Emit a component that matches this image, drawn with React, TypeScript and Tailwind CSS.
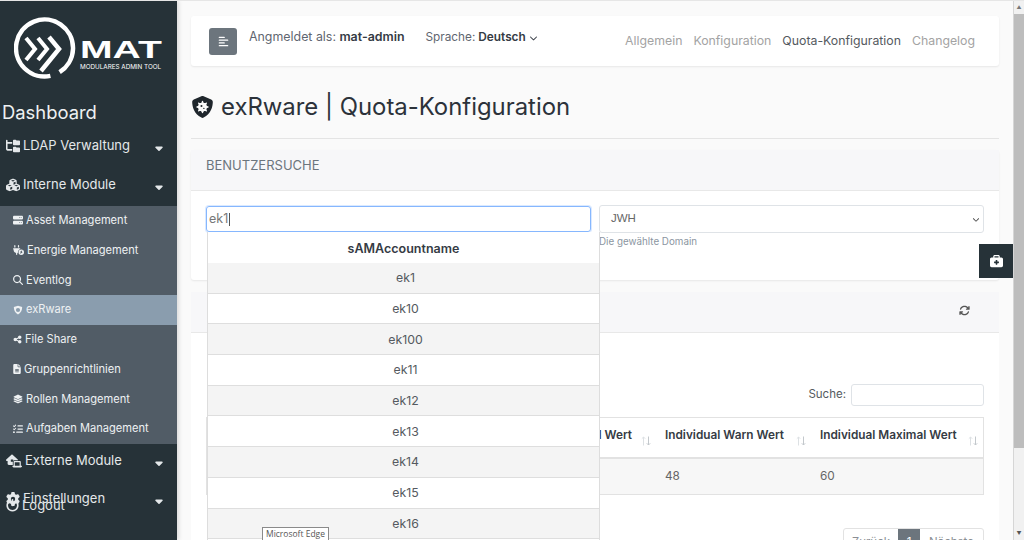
import {
  FaAlignLeft,
  FaArrowsRotate,
  FaBriefcaseMedical,
  FaCaretDown,
  FaChevronDown,
  FaCubes,
  FaFileLines,
  FaFolderTree,
  FaGear,
  FaHouseLaptop,
  FaLayerGroup,
  FaListCheck,
  FaMagnifyingGlass,
  FaPlugCircleBolt,
  FaPowerOff,
  FaServer,
  FaShareNodes,
  FaShieldVirus,
} from "react-icons/fa6";

const font = "font-['Inter','Liberation_Sans',sans-serif]";

function ShieldDot({ className }: { className?: string }) {
  return (
    <svg viewBox="0 0 24 24" className={className} fill="currentColor">
      <path
        fillRule="evenodd"
        d="M12 1.500 22 5c0 8-2.500 14-10 17.500C4.500 19 2 13 2 5zM12 7a5 5 0 1 0 0 10 5 5 0 0 0 0-10z"
      />
    </svg>
  );
}

const subItems = [
  { label: "Asset Management", icon: FaServer, size: "w-[10px] h-[10px]" },
  { label: "Energie Management", icon: FaPlugCircleBolt, size: "w-[11px] h-[10px]" },
  { label: "Eventlog", icon: FaMagnifyingGlass, size: "w-[10px] h-[10px]" },
  { label: "exRware", icon: ShieldDot, size: "w-[10px] h-[10px]", active: true },
  { label: "File Share", icon: FaShareNodes, size: "w-[9px] h-[9px]" },
  { label: "Gruppenrichtlinien", icon: FaFileLines, size: "w-[8px] h-[10px]" },
  { label: "Rollen Management", icon: FaLayerGroup, size: "w-[10px] h-[10px]" },
  { label: "Aufgaben Management", icon: FaListCheck, size: "w-[10px] h-[10px]" },
];

const users = ["ek1", "ek10", "ek100", "ek11", "ek12", "ek13", "ek14", "ek15", "ek16", "ek17"];

function Logo() {
  return (
    <div className="flex h-[98px] items-start pl-[14px] pt-[15px]">
      <svg viewBox="0 0 62 64" className="h-[64px] w-[62px] shrink-0" fill="none">
        <path d="M36.400 59.900A28.500 28.500 0 1 1 45.600 56.200" stroke="#fff" strokeWidth="4.500" />
        <g stroke="#fff">
          <path d="M12 22 21 33 12 44" strokeWidth="4" />
          <path d="M24 22 33 33 24 44" strokeWidth="4" />
          <path d="M35 21 45 33 27 55" strokeWidth="4.500" />
        </g>
      </svg>
      <div className="ml-[4px] flex flex-col pt-[24px] text-white">
        <span className="origin-left font-['Liberation_Sans',sans-serif] text-[23px] leading-[20px] font-bold [transform:scaleX(1.7)]">
          MAT
        </span>
        <span className="mt-[3px] text-[6.300px] leading-[8px] whitespace-nowrap">MODULARES ADMIN TOOL</span>
      </div>
    </div>
  );
}

type RowProps = { icon: typeof FaCubes; label: string; className: string; iconClass?: string };

function SideRow({ icon: Icon, label, className, iconClass = "w-[14px]" }: RowProps) {
  return (
    <div className={`flex items-center pr-[13px] pl-[6px] text-[13px] text-[#e4e8ea] ${className}`}>
      <Icon className={`mr-[3px] h-[14px] shrink-0 ${iconClass}`} />
      <span className="flex-1 whitespace-nowrap">{label}</span>
      <FaCaretDown className="mt-[5px] h-[12px] w-[10px]" />
    </div>
  );
}

function Sidebar() {
  return (
    <aside className="relative z-20 h-full w-[177px] shrink-0 bg-[#263238] shadow-[2px_0_4px_rgba(0,0,0,0.12)]">
      <Logo />
      <div className="h-[28px] pl-[2px] text-[18.400px] leading-[26px] text-[#eef1f2]">Dashboard</div>
      <SideRow icon={FaFolderTree} label="LDAP Verwaltung" className="h-[38px] pb-[1px]" />
      <SideRow icon={FaCubes} label="Interne Module" className="h-[41px] pb-[2px]" />
      <nav className="h-[238px] bg-[#515c66]">
        {subItems.map((item) => {
          const Icon = item.icon;
          return (
            <div
              key={item.label}
              className={`flex h-[29.750px] items-center gap-[3px] pb-[1px] pl-[13px] text-[11.100px] whitespace-nowrap text-[#eef1f3] ${
                item.active ? "bg-[#8a9dae]" : ""
              }`}
            >
              <Icon className={`shrink-0 ${item.size}`} />
              {item.label}
            </div>
          );
        })}
      </nav>
      <SideRow icon={FaHouseLaptop} label="Externe Module" className="h-[35px] pb-[2px]" iconClass="w-[16px]" />
      <SideRow icon={FaGear} label="Einstellungen" className="h-[38px] pt-[1px]" />
      <div className="absolute top-[495px] left-[6px] flex items-center gap-[3px] text-[13px] text-[#e4e8ea]">
        <FaPowerOff className="h-[13px] w-[13px]" />
        Logout
      </div>
    </aside>
  );
}

function TopBar() {
  return (
    <header className="flex h-[50px] items-center rounded-[3px] bg-white pr-[24px] pl-[18px] shadow-[0_1px_2px_rgba(0,0,0,0.08)]">
      <button className="flex h-[27px] w-[28px] items-center justify-center rounded-[3px] bg-[#6c757d] text-white">
        <FaAlignLeft className="h-[11px] w-[11px]" />
      </button>
      <span className="mb-[7px] ml-[12px] text-[12.400px] text-[#5f6670]">
        Angmeldet als: <b className="font-semibold text-[#353b44]">mat-admin</b>
      </span>
      <span className="mb-[7px] ml-[21px] flex items-center gap-[3px] text-[11.800px] text-[#5f6670]">
        Sprache: <b className="font-semibold text-[#353b44]">Deutsch</b>
        <FaChevronDown className="h-[8px] w-[9px] text-[#353b44]" />
      </span>
      <nav className="ml-auto flex gap-[11px] pt-[1px] text-[12.300px] text-[#a3a3a3]">
        <span>Allgemein</span>
        <span>Konfiguration</span>
        <span className="text-[#555a60]">Quota-Konfiguration</span>
        <span>Changelog</span>
      </nav>
    </header>
  );
}

function SortArrows() {
  return (
    <svg viewBox="0 0 10 10" className="mt-[9px] h-[10px] w-[10px] shrink-0" fill="none" strokeWidth="1">
      <path d="M2.500 9.500V1M0.800 2.700 2.500 1l1.700 1.700" stroke="#dde1e4" />
      <path d="M7.500 0.500V9M5.800 7.300 7.500 9l1.700-1.700" stroke="#c3c8cc" />
    </svg>
  );
}

function Dropdown() {
  return (
    <div className="absolute top-[231px] left-[207px] z-10 h-[309px] w-[393px] overflow-hidden border-x border-[#dddddd] bg-white text-center text-[12.300px] text-[#555a60]">
      <div className="flex h-[31px] items-center justify-center pt-[3px] text-[12.500px] font-semibold text-[#353b44]">
        sAMAccountname
      </div>
      {users.map((name, i) => (
        <div
          key={name}
          className={`flex h-[30.700px] items-center justify-center border-b border-[#dedede] pt-[1px] pl-[4px] ${
            i % 2 === 0 ? "bg-[#f4f4f4]" : "bg-white"
          }`}
        >
          {name}
        </div>
      ))}
    </div>
  );
}

function Scrollbar() {
  return (
    <div className="flex h-full w-[11px] shrink-0 flex-col items-center border-l border-[#d6d6d6] bg-[#f1f1f1]">
      <div className="flex h-[13px] items-center text-[5px] leading-none text-[#777]">▲</div>
      <div className="h-[434px] w-full bg-[#bdbdbd]" />
      <div className="mt-auto flex h-[13px] items-center text-[5px] leading-none text-[#555]">▼</div>
    </div>
  );
}

export default function App() {
  return (
    <div className={`${font} relative flex h-[540px] w-[1024px] overflow-hidden border-t border-[#e6e6e6] bg-[#fafafa]`}>
      <Sidebar />
      <main className="h-full min-w-0 flex-1 overflow-hidden px-[14px] pt-[15px]">
        <TopBar />
        <div className="mt-[25px] flex h-[48px] items-start gap-[7px] border-b border-[#e4e4e4] text-[#2c323a]">
          <FaShieldVirus className="mt-[5px] h-[22px] w-[23px] text-[#1f262c]" />
          <h1 className="text-[23.900px] leading-[32px] font-normal">exRware | Quota-Konfiguration</h1>
        </div>

        <section className="mt-[11px] h-[130px] rounded-[3px] bg-white shadow-[0_1px_2px_rgba(0,0,0,0.08)]">
          <div className="flex h-[41px] items-center border-b border-[#e8e8e8] bg-[#f7f7f9] px-[15px] pb-[9px] text-[13px] text-[#6c757d]">
            BENUTZERSUCHE
          </div>
          <div className="flex gap-[8px] px-[15px] pt-[14px]">
            <div className="mt-[1px] flex h-[26px] w-[385px] items-center rounded-[3px] border border-[#86b7fe] px-[2px] text-[12.500px] text-[#777] shadow-[0_0_0_1px_rgba(134,183,254,0.3)]">
              ek1<span className="ml-px h-[13px] w-px bg-[#555]" />
            </div>
            <div className="w-[385px]">
              <div className="flex h-[28px] items-center justify-between rounded-[3px] border border-[#dfe3e7] pr-[3px] pl-[11px] font-['Liberation_Sans',sans-serif] text-[11.500px] text-[#666]">
                JWH
                <FaChevronDown className="h-[7px] w-[8px] text-[#444]" />
              </div>
              <div className="mt-[2px] text-[9.800px] text-[#8b95a1]">Die gewählte Domain</div>
            </div>
          </div>
        </section>

        <section className="mt-[12px] h-[260px] rounded-[3px] bg-white">
          <div className="flex h-[41px] items-center justify-end border-b border-[#e8e8e8] bg-[#f7f7f9] pr-[29px] pb-[3px] text-[#555]">
            <FaArrowsRotate className="h-[11px] w-[11px]" />
          </div>
          <div className="mt-[51px] mr-[15px] flex items-center justify-end gap-[5px] text-[11.500px] text-[#555a60]">
            Suche:
            <div className="h-[22px] w-[133px] rounded-[3px] border border-[#dfe3e7]" />
          </div>
          <div className="mx-[15px] mt-[11px] border border-[#e2e2e2] text-[11.800px]">
            <div className="grid h-[41px] grid-cols-[448px_155px_1fr] border-b-2 border-[#e2e2e2] font-semibold text-[#353b44]">
              <div className="flex justify-end gap-[9px] pt-[9px] pr-[4px]">
                Maximal Wert <SortArrows />
              </div>
              <div className="flex justify-between pt-[9px] pr-[4px] pl-[10px]">
                Individual Warn Wert <SortArrows />
              </div>
              <div className="flex justify-between pt-[9px] pr-[5px] pl-[10px]">
                Individual Maximal Wert <SortArrows />
              </div>
            </div>
            <div className="grid h-[35px] grid-cols-[448px_155px_1fr] items-center bg-[#f7f7f7] pt-[1px] text-[#666]">
              <div />
              <div className="pl-[10px]">48</div>
              <div className="pl-[10px]">60</div>
            </div>
          </div>
          <div className="mt-[33px] mr-[15px] ml-auto flex h-[26px] w-[141px] rounded-[3px] border border-[#e2e2e2] text-[11.500px] text-[#8b8f94]">
            <span className="flex w-[54px] justify-center pt-[5px]">Zurück</span>
            <span className="flex w-[22px] justify-center bg-[#6c757d] pt-[5px] text-white">1</span>
            <span className="flex flex-1 justify-center pt-[5px]">Nächste</span>
          </div>
        </section>
      </main>
      <Scrollbar />

      <Dropdown />

      <div className="absolute top-[243px] left-[979px] z-10 flex h-[34px] w-[34px] items-center justify-center bg-[#263238] text-white">
        <FaBriefcaseMedical className="h-[13px] w-[13px]" />
      </div>
      <div className="absolute top-[526px] left-[262px] z-30 flex h-[14px] w-[67px] items-center justify-center border border-[#8a8a8a] bg-white font-['Open_Sans',sans-serif] text-[8.500px] text-[#555]">
        Microsoft Edge
      </div>
    </div>
  );
}
